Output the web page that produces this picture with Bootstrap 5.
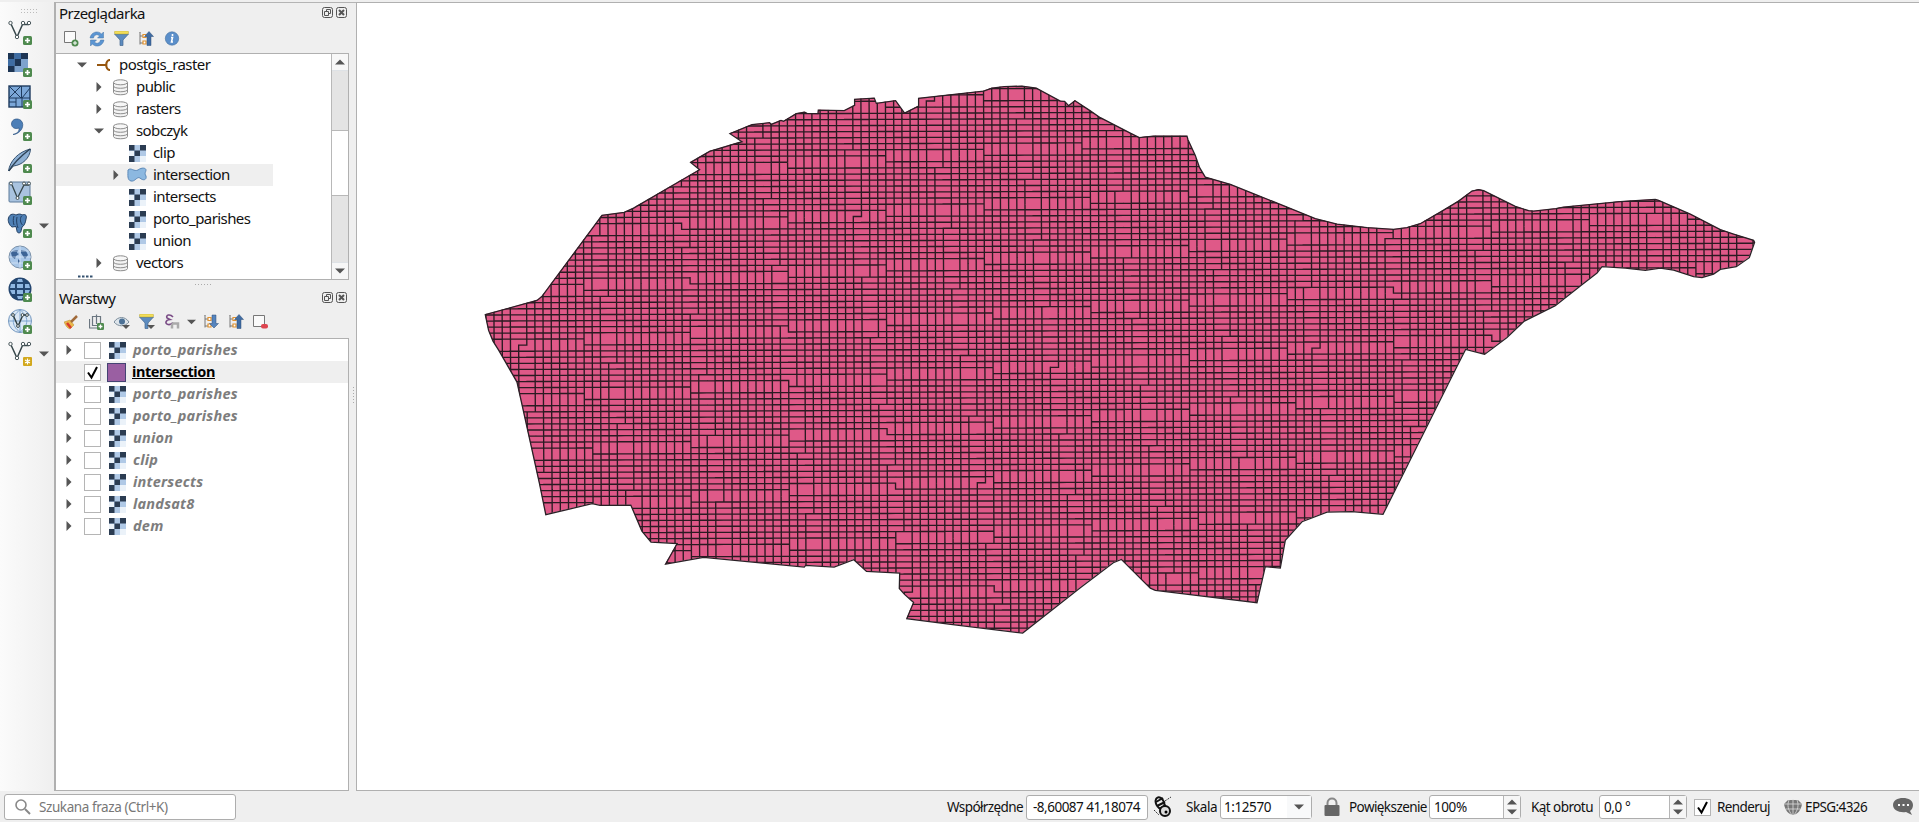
<!DOCTYPE html>
<html lang="pl">
<head>
<meta charset="utf-8">
<title>QGIS</title>
<link href="https://cdn.jsdelivr.net/npm/bootstrap@5.3.0/dist/css/bootstrap.min.css" rel="stylesheet">
<style>
html,body{height:100%}
body{background:#efefef;font-family:"Noto Sans","Open Sans",sans-serif;font-size:15px;line-height:22px;color:#111;overflow:hidden}
svg{display:block;flex:none}
.app-shell{height:822px;border-top:2px solid #efefef;box-shadow:inset 0 1px 0 #b4b4b4}
.tool-col{width:54px;background:linear-gradient(90deg,#fbfbfb,#efefef);padding-top:18px}
.tool-row{height:32.1px;padding-left:7px}
.dock-col{width:296px;border-left:2px solid #b0b0b0}
.dock-head{height:25px;padding:0 3px 4px 3px;font-size:15px;letter-spacing:-.55px}
.dock-tools{height:26px;padding-left:8px}
.tree-box{background:#fff;border:1px solid #b0b0b0;border-left:0;width:293px;overflow:hidden}
.tree-row{height:22px;white-space:nowrap;letter-spacing:-.58px}
.tree-row>span:not(.chk){margin-top:-2px}
.sel-row{background:#efefef}
.layer-row{color:#7d7d7d;font-weight:700;font-style:italic;font-size:14.5px;letter-spacing:.22px}
.layer-row.sel-row{color:#000;font-style:normal;text-decoration:underline;letter-spacing:-.4px}
.chk{width:17px;height:17px;border:1px solid #b5b5b5;background:#fff;flex:none}
.scroll-col{width:17px;border-left:1px solid #b8b8b8;background:#e4e4e4}
.scroll-btn{height:17px;background:#f7f7f7}
.scroll-thumb{height:66px;background:#fff;border:solid #b8b8b8;border-width:1px 0}
.map-box{margin-left:6px;background:#fff;border:1px solid #b0b0b0;border-right:0}
.status-line{height:31px;font-size:13.5px;letter-spacing:-.42px;white-space:nowrap;padding-top:1px}
.field{height:24px;background:#fff;border:1px solid #adadad;border-radius:3px}
.spin{width:17px;border-left:1px solid #b5b5b5;background:#f6f6f6}
</style>
<script src="https://cdn.jsdelivr.net/npm/bootstrap@5.3.0/dist/js/bootstrap.bundle.min.js"></script>
</head>
<body>
<svg width="0" height="0" class="position-absolute">
<defs>
<symbol id="plus" viewBox="0 0 9 9"><rect width="9" height="9" rx="1.5" fill="#4f8a4f"/><path d="M4.5 2v5M2 4.5h5" stroke="#fff" stroke-width="1.7"/></symbol>
<symbol id="vee" viewBox="0 0 25 25"><path d="M4 4L10 17L15.500 4.500H22" fill="none" stroke="#37474b" stroke-width="1.500"/><g fill="#fff" stroke="#4a585c"><circle cx="3.500" cy="3" r="1.700"/><circle cx="10" cy="17" r="1.700"/><circle cx="16" cy="3" r="1.700"/><circle cx="22" cy="3" r="1.700"/></g></symbol>
<symbol id="ras" viewBox="0 0 17 17"><path fill="#b0c9e6" d="M0 0h17v17H0z"/><path fill="#fff" d="M11 11h6v6h-6zM0 6h5v5H0z" opacity=".75"/><path fill="#2b3c52" d="M0 0h5.500v5.500H0zM11 0h6v5.500h-6zM5.500 5.500H11V11H5.500zM0 11h5.500v6H0z"/></symbol>
<symbol id="db" viewBox="0 0 17 17"><path d="M1.500 3.500v10c0 3 14 3 14 0v-10" fill="#f3f3f3" stroke="#8c8c8c"/><ellipse cx="8.500" cy="3.300" rx="7" ry="2.500" fill="#f7f7f7" stroke="#8c8c8c"/><path d="M1.500 7c0 3 14 3 14 0M1.500 10.500c0 3 14 3 14 0" fill="none" stroke="#8c8c8c"/></symbol>
<symbol id="tr" viewBox="0 0 6 10"><path d="M.5 0l5 5-5 5z" fill="#555"/></symbol>
<symbol id="td" viewBox="0 0 10 6"><path d="M0 .5h10l-5 5z" fill="#555"/></symbol>
<symbol id="tu" viewBox="0 0 10 6"><path d="M0 5.500h10l-5-5z" fill="#555"/></symbol>
<symbol id="flt" viewBox="0 0 15 15"><path d="M.5 3h14L9 9v5.500H6V9z" fill="#5d8cc0" stroke="#46688f" stroke-width=".7"/><rect x=".5" width="14" height="3" rx="1" fill="#f3de5a" stroke="#b7a437" stroke-width=".5"/></symbol>
<symbol id="lst" viewBox="0 0 15 15"><path d="M.5 1.500h1M1 1.500v12M1 5h3M1 12h3" stroke="#777" fill="none"/><path d="M4 3.500h3v3H4zM4 10h3v3H4z" fill="#fff" stroke="#e0922f" stroke-width="1.200"/></symbol>
<symbol id="up" viewBox="0 0 15 15"><use href="#lst"/><path d="M10 .5l4.500 5h-2.500v9H8v-9H5.500z" fill="#3f6ca3" stroke="#2e4f78" stroke-width=".5"/></symbol>
<symbol id="dn" viewBox="0 0 15 15"><use href="#lst"/><path d="M10 14l4.500-4.500h-2.500V1H8v8.500H5.500z" fill="#5584bd" stroke="#2e4f78" stroke-width=".5"/></symbol>
<symbol id="win" viewBox="0 0 25 11"><g fill="none" stroke="#555"><rect x=".5" y=".5" width="10" height="10" rx="2"/><rect x="14.500" y=".5" width="10" height="10" rx="2"/><path d="M4.500 4V2.500h4v4H7M2.500 4.500h4v4h-4z"/><path d="M17 3l5 5M22 3l-5 5" stroke-width="2"/></g></symbol>
<symbol id="tick" viewBox="0 0 15 15"><path d="M3 7.500l3.500 5L12 2" fill="none" stroke="#000" stroke-width="2"/></symbol>
</defs></svg>

<div class="app-shell d-flex flex-column">
<div class="d-flex flex-grow-1" style="height:789px">

<div class="tool-col position-relative">
<svg class="position-absolute" style="left:21px;top:7px" width="18" height="5"><path d="M0 .5h18M0 3.500h18" stroke="#bbb" stroke-dasharray="1 2"/></svg>
<div class="tool-row"><svg width="25" height="25"><use href="#vee"/><use href="#plus" x="16" y="16" width="9" height="9"/></svg></div>
<div class="tool-row"><svg width="25" height="25"><rect x="1" y="1" width="20" height="19" fill="#7ea3cd"/><path d="M1 1h6.500v6H1zM14 1h7v6h-7zM7.500 7H14v7H7.500zM1 14h6.500v6H1z" fill="#1d3554"/><path d="M7.500 1H14v6H7.500zM1 7h6.500v7H1z" fill="#3f6da3"/><use href="#plus" x="16" y="16" width="9" height="9"/></svg></div>
<div class="tool-row"><svg width="25" height="25"><rect x="2" y="2" width="21" height="21" fill="#7ba7d8" stroke="#1f3b5e" stroke-width="1.400"/><path d="M2 14h21M14.500 2v12M9 14v9M2 18h7M2 2l12 12M14 2L2 14M15 14l8-10M15 14v9" stroke="#1f3b5e" fill="none"/><use href="#plus" x="16" y="16" width="9" height="9"/></svg></div>
<div class="tool-row"><svg width="25" height="25"><path d="M6 18.500c5-1 6.500-4 6-6.500-4 1.500-7.500-.5-7.500-4 0-5 6-6.500 9.500-3.500 4.500 4.500 0 13.500-8 14z" fill="#4d7fb7" stroke="#2d5484" stroke-width=".7"/><use href="#plus" x="16" y="16" width="9" height="9"/></svg></div>
<div class="tool-row"><svg width="25" height="25"><path d="M1.500 23C3 13 11 4 23.500 1c-.5 9-8 16-17 17z" fill="#8eb0d4" stroke="#33506f"/><path d="M2 23C7 14 14 8 23 1" fill="none" stroke="#2d4053" stroke-width="1.400"/><use href="#plus" x="16" y="16" width="9" height="9"/></svg></div>
<div class="tool-row"><svg width="25" height="25"><rect x="2" y="2" width="21" height="20" rx="1" fill="#a9c3df" stroke="#5c7b9a"/><path d="M5 5l5.500 13L17 5h5" fill="none" stroke="#37474b" stroke-width="1.300"/><g fill="#fff" stroke="#4a585c"><circle cx="4" cy="3.500" r="1.500"/><circle cx="10.500" cy="18" r="1.500"/><circle cx="17" cy="3.500" r="1.500"/><circle cx="22" cy="3.500" r="1.500"/></g><use href="#plus" x="16" y="16" width="9" height="9"/></svg></div>
<div class="tool-row d-flex"><svg width="25" height="25"><path d="M1.500 5C3 0 7 1 9 2c3-1.500 5-1 6 0 4-1.500 5 1 4 4-.5 4-2 7-4 8l-1 4c0 2.500-4 2.500-4 0l-1-4.500-4 .5C2.500 12.500.500 8 1.500 5z" fill="#4f80b5" stroke="#223f63"/><path d="M7 3c-1 3-1 6 0 9M14.500 3c-2 3-1 7 1 9M10 4c-1 4 0 8 1 11" fill="none" stroke="#223f63"/><use href="#plus" x="16" y="16" width="9" height="9"/></svg><svg width="10" height="6" style="margin:10px 0 0 7px"><use href="#td"/></svg></div>
<div class="tool-row"><svg width="25" height="25"><circle cx="13" cy="12" r="11" fill="#a9c7e8" stroke="#7c92aa"/><path d="M4 8c2-3 4-3 7-3l-1 3 2 1-3 2-1 3-3-2zM14 5l5 1 2 4-3 4-2-3-2-3zM11 14l2 2-2 3z" fill="#3d6496"/><path d="M2 12h22M13 1v22M4 6h18M4 18h18" stroke="#e7f0fa" stroke-width=".6"/><use href="#plus" x="16" y="16" width="9" height="9"/></svg></div>
<div class="tool-row"><svg width="25" height="25"><circle cx="13" cy="12" r="11.500" fill="#23456f"/><path d="M4 7h4v4H3zM10 7h6v4h-6zM18 7h4l1 4h-5zM3 13h5v4H5zM10 13h6v4h-6zM18 13h5l-2 4h-3zM10 5l1-3h4l1 3zM10 19h6l-1 3h-4z" fill="#8fb7e2"/><use href="#plus" x="16" y="16" width="9" height="9"/></svg></div>
<div class="tool-row"><svg width="25" height="25"><circle cx="13" cy="12" r="11.500" fill="#dbe8f5" stroke="#7397bf"/><path d="M2 12h22M13 1v22M13 1c-9 6-9 16 0 22 9-6 9-16 0-22" fill="none" stroke="#7fa6d0"/><path d="M6 6l5 11 5-11h4" fill="none" stroke="#2c3c40" stroke-width="1.400"/><g fill="#fff" stroke="#37474b"><circle cx="6" cy="6" r="1.400"/><circle cx="11" cy="17" r="1.400"/><circle cx="15.500" cy="6" r="1.400"/><circle cx="20" cy="6" r="1.400"/></g><use href="#plus" x="16" y="16" width="9" height="9"/></svg></div>
<div class="tool-row d-flex"><svg width="25" height="25"><use href="#vee"/><rect x="16" y="16" width="9" height="9" rx="1" fill="#d2a81d"/><path d="M20.500 17.500v6M18 19l5 3M23 19l-5 3" stroke="#fff" stroke-width="1.200"/></svg><svg width="10" height="6" style="margin:10px 0 0 7px"><use href="#td"/></svg></div>
</div>

<div class="dock-col d-flex flex-column">
<div class="dock-head d-flex align-items-center justify-content-between"><span>Przeglądarka</span><svg width="25" height="11"><use href="#win"/></svg></div>
<div class="dock-tools d-flex gap-2 pt-1">
<svg width="17" height="16"><path d="M.5.5h11v11H.5z" fill="#fafafa" stroke="#777"/><circle cx="11" cy="12" r="3.500" fill="#4f8a4f"/><path d="M11 10v4M9 12h4" stroke="#fff"/></svg>
<svg width="16" height="16"><path d="M1 7C2 1 9-1 12.500 3l2-2v6H8.500l2-2C8 2.500 5 4 4.500 7zM15 9c-1 6-8 8-11.500 4l-2 2V9H7.500l-2 2c2.500 2.500 5.500 1 6-2z" fill="#5b95d2" stroke="#4675a6" stroke-width=".5"/></svg>
<svg width="17" height="16"><use href="#flt" x="1" width="15" height="15"/></svg>
<svg width="17" height="16"><use href="#up" x="1" width="15" height="15"/></svg>
<svg width="17" height="16"><circle cx="9" cy="7.500" r="6.700" fill="#5b8fca" stroke="#44709f" stroke-width=".6"/><path d="M9.500 3v2M8 6.500h1.500L8.500 11H10" stroke="#fff" stroke-width="1.600" fill="none"/></svg>
</div>
<div class="tree-box d-flex" style="height:227px">
<div class="flex-grow-1" style="width:270px">
<div class="tree-row d-flex align-items-center" style="padding-left:21px"><svg width="10" height="6"><use href="#td"/></svg><svg width="14" height="12" style="margin:0 8px 0 10px"><path d="M0 6h7M13 1c-5 0-5 10 0 10M6 6h4" fill="none" stroke="#96560f" stroke-width="2.200"/></svg><span>postgis_raster</span></div>
<div class="tree-row d-flex align-items-center" style="padding-left:40px"><svg width="6" height="10"><use href="#tr"/></svg><svg width="17" height="17" style="margin:0 7px 0 10px"><use href="#db"/></svg><span>public</span></div>
<div class="tree-row d-flex align-items-center" style="padding-left:40px"><svg width="6" height="10"><use href="#tr"/></svg><svg width="17" height="17" style="margin:0 7px 0 10px"><use href="#db"/></svg><span>rasters</span></div>
<div class="tree-row d-flex align-items-center" style="padding-left:38px"><svg width="10" height="6"><use href="#td"/></svg><svg width="17" height="17" style="margin:0 7px 0 8px"><use href="#db"/></svg><span>sobczyk</span></div>
<div class="tree-row d-flex align-items-center" style="padding-left:73px"><svg width="17" height="17" style="margin-right:7px"><use href="#ras"/></svg><span>clip</span></div>
<div class="tree-row d-flex align-items-center sel-row" style="padding-left:57px;width:217px"><svg width="6" height="10"><use href="#tr"/></svg><svg width="20" height="16" style="margin:0 6px 0 8px"><path d="M1 3c3-3 6 2 10 0 4-3 8-2 8 0s-2 3 0 6c1 4-3 5-6 2-3-2-5 4-9 3s-3-6-3-11z" fill="#8cb8e0" stroke="#5b88b8"/></svg><span>intersection</span></div>
<div class="tree-row d-flex align-items-center" style="padding-left:73px"><svg width="17" height="17" style="margin-right:7px"><use href="#ras"/></svg><span>intersects</span></div>
<div class="tree-row d-flex align-items-center" style="padding-left:73px"><svg width="17" height="17" style="margin-right:7px"><use href="#ras"/></svg><span>porto_parishes</span></div>
<div class="tree-row d-flex align-items-center" style="padding-left:73px"><svg width="17" height="17" style="margin-right:7px"><use href="#ras"/></svg><span>union</span></div>
<div class="tree-row d-flex align-items-center" style="padding-left:40px"><svg width="6" height="10"><use href="#tr"/></svg><svg width="17" height="17" style="margin:0 7px 0 10px"><use href="#db"/></svg><span>vectors</span></div>
<svg width="20" height="5" style="margin-left:22px"><path d="M0 2.500h15" stroke="#34516f" stroke-width="2" stroke-dasharray="2.500 1.500"/></svg>
</div>
<div class="scroll-col d-flex flex-column">
<div class="scroll-btn d-flex align-items-center justify-content-center border-bottom"><svg width="10" height="6"><use href="#tu"/></svg></div>
<div style="height:59px"></div><div class="scroll-thumb"></div><div class="flex-grow-1"></div>
<div class="scroll-btn d-flex align-items-center justify-content-center border-top"><svg width="10" height="6"><use href="#td"/></svg></div>
</div>
</div>
<div class="d-flex justify-content-center pt-1" style="height:7px"><svg width="17" height="1"><path d="M0 .5h17" stroke="#aaa" stroke-width="1" stroke-dasharray="1 2"/></svg></div>
<div class="dock-head d-flex align-items-center justify-content-between" style="height:23px;padding-bottom:2px"><span>Warstwy</span><svg width="25" height="11"><use href="#win"/></svg></div>
<div class="dock-tools d-flex pt-1" style="height:28px">
<svg width="25" height="17"><path d="M0 8l6-2 4 5-4 4c-3-1-4-3-6-7z" fill="#e9b84b" stroke="#b98a2d" stroke-width=".5"/><path d="M3 9l4 5" stroke="#d83a2c" stroke-width="2.500"/><path d="M7 8l6-6" stroke="#a06a3a" stroke-width="2.500"/></svg>
<svg width="25" height="17"><path d="M.5 5v9h9M3.500 2.500v9h8v-9zM7.500 10V.5" fill="none" stroke="#6b7680" stroke-width="1.200"/><use href="#plus" x="8" y="9" width="7" height="7"/></svg>
<svg width="25" height="17"><path d="M0 8c4-6 11-6 15 0-4 5-11 5-15 0z" fill="#dde4ea" stroke="#7c8d9c"/><circle cx="8" cy="7.500" r="3" fill="#4c7196"/><path d="M8 11h8l-4 4z" fill="#555"/></svg>
<svg width="25" height="17"><use href="#flt" width="15" height="15"/><path d="M8 11h8l-4 4z" fill="#555"/></svg>
<svg width="23" height="17"><path d="M9 3C6-.5 1.500 1 3 4l3 1.500C1 6 1 10 4 10.500c2 .3 4-.5 5-2" fill="none" stroke="#7a4c86" stroke-width="1.600"/><path d="M8 9.500h6v5M8 9.500v5" stroke="#aaa" stroke-width="2.500" fill="none"/></svg>
<svg width="16" height="17"><use href="#td" x="0" y="5" width="9" height="6"/></svg>
<svg width="25" height="17"><use href="#dn" x="1" width="15" height="15"/></svg>
<svg width="25" height="17"><use href="#up" x="1" width="15" height="15"/></svg>
<svg width="16" height="17"><path d="M.5 1.500h11v11H.5z" fill="#fafafa" stroke="#777"/><rect x="8" y="10" width="7" height="4.500" rx="2" fill="#dd4550"/></svg>
</div>
<div class="tree-box flex-grow-1" id="layers"></div>
</div>

<div class="map-box flex-grow-1 position-relative"><svg id="map" width="1561" height="786" viewBox="357 3 1561 786"></svg>
<svg class="position-absolute" style="left:-5px;top:384px" width="3" height="18"><path d="M1.500 0v18" stroke="#aaa" stroke-dasharray="1 2"/></svg></div>
</div>

<div class="status-line d-flex align-items-center flex-shrink-0">
<div class="field d-flex align-items-center" style="margin-left:4px;width:232px;height:26px;padding-left:10px;color:#777"><svg width="16" height="16" style="margin-right:8px"><circle cx="6" cy="6" r="5" fill="none" stroke="#888" stroke-width="1.600"/><path d="M10 10l5 5" stroke="#888" stroke-width="2"/></svg><span>Szukana fraza (Ctrl+K)</span></div>
<span style="margin-left:711px;width:75px;letter-spacing:-.6px">Współrzędne</span>
<div class="field ms-1 d-flex align-items-center" style="width:122px;padding-left:6px;height:25px"><span style="letter-spacing:-.5px">-8,60087 41,18074</span></div>
<svg width="20" height="22" style="margin-left:5px"><ellipse cx="7" cy="7" rx="6" ry="4" fill="#eee" stroke="#111" stroke-width="2" transform="rotate(65 7 7)"/><path d="M3 6l7-4M4 10l8-4M6 13l7-4" stroke="#111" stroke-width="2"/><circle cx="12" cy="15" r="5" fill="#ddd" stroke="#111" stroke-width="2"/><circle cx="13" cy="16" r="1.500"/><path d="M12 5l6-4M1 14l5 5" stroke="#333" stroke-dasharray="2 1"/></svg>
<span style="margin-left:13px;width:31px">Skala</span>
<div class="field d-flex align-items-center" style="margin-left:3px;width:92px;padding-left:3px"><span class="flex-grow-1">1:12570</span><div class="h-100 d-flex align-items-center justify-content-center bg-light" style="width:24px"><svg width="10" height="6"><use href="#td"/></svg></div></div>
<svg width="16" height="20" style="margin-left:12px"><path d="M3.500 9V6c0-6 9-6 9 0v3" fill="none" stroke="#888" stroke-width="2"/><rect x=".5" y="8" width="15" height="11" rx="1" fill="#666"/></svg>
<span style="margin-left:9px;width:76px;letter-spacing:-.58px">Powiększenie</span>
<div class="field d-flex align-items-center" style="margin-left:4px;width:92px;padding-left:4px"><span class="flex-grow-1">100%</span><div class="spin h-100 d-flex flex-column align-items-center justify-content-center gap-1"><svg width="10" height="6"><use href="#tu"/></svg><svg width="10" height="6"><use href="#td"/></svg></div></div>
<span style="margin-left:10px;width:59px;letter-spacing:-.55px">Kąt obrotu</span>
<div class="field d-flex align-items-center" style="margin-left:9px;width:88px;padding-left:4px"><span class="flex-grow-1">0,0 °</span><div class="spin h-100 d-flex flex-column align-items-center justify-content-center gap-1"><svg width="10" height="6"><use href="#tu"/></svg><svg width="10" height="6"><use href="#td"/></svg></div></div>
<div class="chk" style="margin-left:7px"><svg width="15" height="15"><use href="#tick"/></svg></div>
<span style="margin-left:6px;width:53px;letter-spacing:-.6px">Renderuj</span>
<svg width="20" height="20" style="margin-left:13px"><path d="M1 7l4-4h10l4 4c-1 6-4 10-9 11C5 17 2 13 1 7z" fill="#777"/><path d="M1 7h18M3 12h14M10 2v16M6 3c-2 5-1 10 3 15M14 3c2 5 1 10-3 15" stroke="#ddd" fill="none" stroke-width=".8"/></svg>
<span style="margin-left:2px;width:64px;letter-spacing:-.6px">EPSG:4326</span>
<svg width="21" height="20" style="margin-left:24px"><path d="M10 1c5.500 0 10 2.500 10 7 0 3-1.500 5-3 6l2 4-6-3C6 16 0 13 0 8c0-4.500 4.500-7 10-7z" fill="#666"/><path d="M5 8h2M9.500 8h2M14 8h2" stroke="#fff" stroke-width="2"/></svg>
</div>
</div>

<script>
// Layer tree
const layers = ['porto_parishes','intersection','porto_parishes','porto_parishes','union','clip','intersects','landsat8','dem'];
document.getElementById('layers').innerHTML = layers.map((n, k) => k === 1
  ? `<div class="tree-row layer-row sel-row d-flex align-items-center" style="padding-left:28px"><span class="chk"><svg width="15" height="15"><use href="#tick"/></svg></span><svg width="19" height="19" style="margin:0 6px"><rect x=".5" y=".5" width="18" height="18" fill="#9a5fa2" stroke="#454373"/></svg><span>${n}</span></div>`
  : `<div class="tree-row layer-row d-flex align-items-center" style="padding-left:10px"><svg width="6" height="10" style="margin-right:12px"><use href="#tr"/></svg><span class="chk"></span><svg width="17" height="17" style="margin:0 7px 0 8px"><use href="#ras"/></svg><span>${n}</span></div>`).join('');

// Vectorised raster: neighbouring cells that sample the same source pixel are merged
const outline = `485,314.3 536.7,300 541.7,296 601.7,215 624,212 633.3,207.7 699.3,169.3 690.3,162 709.3,151 741.7,141.3 729.7,133.3 751.7,124.3 769.3,122.3 771,124 780.7,120 783.3,121 796,113.3 804.3,111.7 806.7,113 817.7,113.3 818,109.7 844,110.3 854.3,105 854.3,99 874,97.7 876,103 895.3,100.3 904.3,112.7 918.3,105.7 918.3,98 970,92.3 983.3,90.7 991.7,87.7 1004,86.3 1021.7,85.7 1036,87.7 1060,100.7 1064.3,101 1068.3,105.3 1074.7,100.3 1089.3,110 1100,117.3 1130,132.7 1139,137.3 1153.3,135.7 1186.7,135.7 1187.7,139.3 1195,155 1199.3,167.3 1205,176.7 1230,184 1256.7,194.7 1286.7,206.7 1315,218.3 1336.7,223.7 1366.7,227.3 1393.3,229 1406.7,227.3 1420,223.3 1441.7,210.7 1458.3,200.7 1471.7,190.7 1478.3,189.3 1483.3,190.3 1515,206 1528.3,210.3 1533.3,210.7 1555.7,208.3 1563.3,206.7 1620,201.3 1655,199 1658.3,200 1690,213.7 1720,229.3 1733.3,233.7 1753.3,240 1754.3,242 1749,257.3 1736,266.3 1720,269 1713.3,273.7 1701.7,277.3 1693.3,276.3 1673.3,269.7 1660,267.7 1645,270 1625,267.7 1601.7,266.3 1596.7,272.7 1580,285.7 1555,305.3 1524,320.7 1506.7,337 1484.3,354 1465.3,349 1455,369.3 1382.7,514 1351.7,511.3 1326.7,511.7 1301.7,521.3 1285,540 1280,567.7 1265,566.3 1256.7,602.3 1155,590 1150,587.7 1121,559 1113,562.3 1080,587.3 1022.4,632.7 952.4,624.3 906.5,618.3 913.3,602 904.2,594 899,588 899.4,572.7 866.2,571 853.5,559.3 833.8,566.7 805.3,565 804,566.7 762.6,562.7 703.3,557 665.3,563.7 676.8,543.3 650.7,541.7 641.6,530.7 630.5,504.7 599.7,505 591.8,503.3 545.5,514.3 539.2,483.3 516.7,381.7 498.5,350 492.7,340.7 488.3,330`;
const W = 8.178, H = 6.063;
const sx = (i, j) => i - Math.floor((i - j * 0.0962 + 1.73) / 10.771);
const sy = (i, j) => j - Math.floor((j + i * 0.08135 + 1.055) / 9.0085);
const same = (a, b, c, d) => sx(a, b) === sx(c, d) && sy(a, b) === sy(c, d);
const pt = (i, j) => {
  const x = 788 + W * i, y = 277.3 + H * j;
  return (x + .005 * (y - 300) + .3).toFixed(2) + ' ' + (y - .004 * (x - 738) + .3).toFixed(2);
};
let d = '';
for (let i = -38; i < 120; i++) for (let j = -33; j < 60; j++) {
  if (!same(i - 1, j, i, j)) d += `M${pt(i, j)}L${pt(i, j + 1)}`;
  if (!same(i, j - 1, i, j)) d += `M${pt(i, j)}L${pt(i + 1, j)}`;
}
document.getElementById('map').innerHTML = `<clipPath id="area"><polygon points="${outline}"/></clipPath>
<polygon points="${outline}" fill="#df5988"/><path d="${d}" clip-path="url(#area)" fill="none" stroke="#2b1a22" stroke-width="1.35" stroke-linecap="square"/>
<polygon points="${outline}" fill="none" stroke="#2a2026" stroke-width="1.3" transform="translate(.3 .4)"/>`;
</script>
</body>
</html>
